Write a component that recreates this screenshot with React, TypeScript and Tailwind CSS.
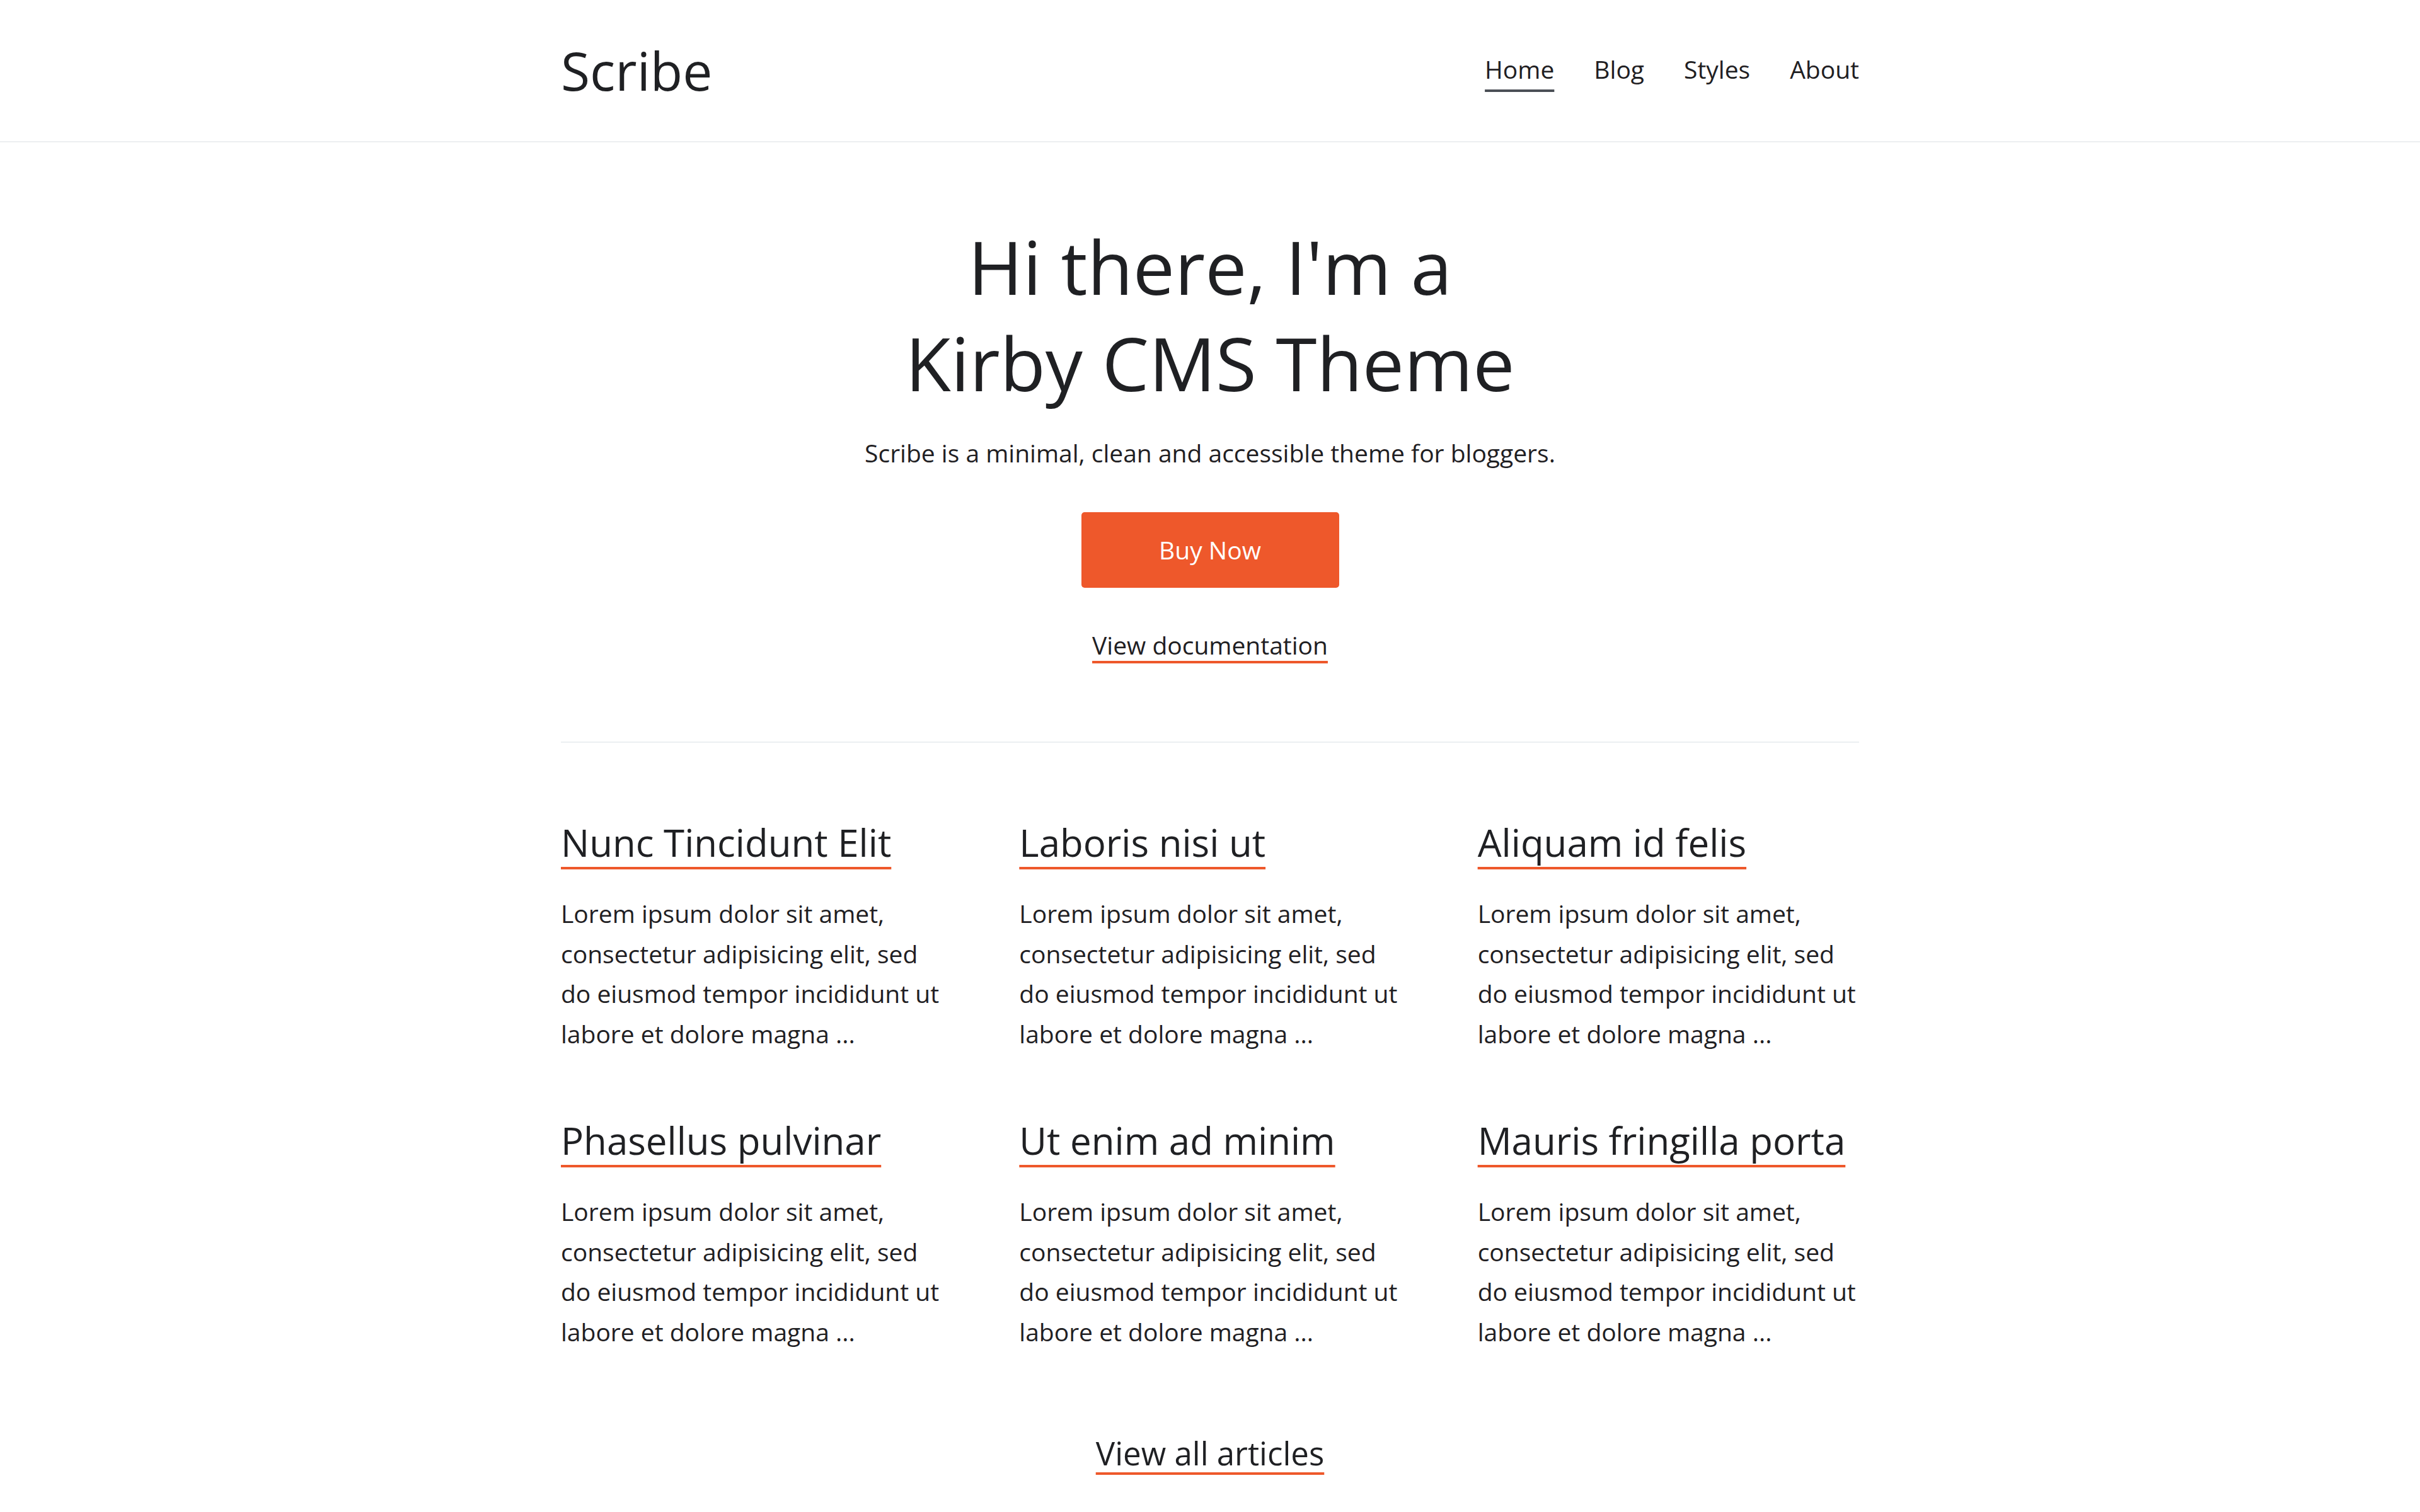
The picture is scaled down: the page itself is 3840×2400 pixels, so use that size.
import React from "react";

const Posts = [
  { title: "Nunc Tincidunt Elit" },
  { title: "Laboris nisi ut" },
  { title: "Aliquam id felis" },
  { title: "Phasellus pulvinar" },
  { title: "Ut enim ad minim" },
  { title: "Mauris fringilla porta" },
];

const excerpt = [
  "Lorem ipsum dolor sit amet,",
  "consectetur adipisicing elit, sed",
  "do eiusmod tempor incididunt ut",
  "labore et dolore magna ...",
];

const navLinks = ["Home", "Blog", "Styles", "About"];

const App = () => {
  return (
    <div className="min-h-screen bg-white font-['Open_Sans',sans-serif] text-[#1f2023]">
      {/* header */}
      <header className="h-[226px] border-b-2 border-[#eceff1]">
        <div className="mx-auto flex h-full w-[2060px] items-center justify-between">
          <a href="#" className="text-[84px] leading-none">
            Scribe
          </a>
          <nav className="flex gap-[63px] pb-[5px] text-[39px] leading-none">
            {navLinks.map((link, idx) =>
              idx === 0 ? (
                <a
                  key={link}
                  href="#"
                  className="underline decoration-[#4a4f56] decoration-[4px] underline-offset-[17px] [text-decoration-skip-ink:none]"
                >
                  {link}
                </a>
              ) : (
                <a key={link} href="#">
                  {link}
                </a>
              )
            )}
          </nav>
        </div>
      </header>

      {/* hero */}
      <section className="mx-auto w-[2060px] pt-[120px] text-center">
        <h1 className="text-[118px] font-normal leading-[153px]">
          Hi there, I'm a
          <br />
          Kirby CMS Theme
        </h1>
        <p className="mt-[35px] text-[39px] leading-[64px]">
          Scribe is a minimal, clean and accessible theme for bloggers.
        </p>
        <div className="mt-[62px] flex justify-center">
          <a
            href="#"
            className="flex h-[120px] w-[409px] items-center justify-center rounded-[5px] bg-[#ee582b] text-[39px] text-white"
          >
            Buy Now
          </a>
        </div>
        <div className="mt-[59px] text-[39px] leading-[64px]">
          <a
            href="#"
            className="underline decoration-[#ee582b] decoration-[4px] underline-offset-[10px] [text-decoration-skip-ink:none]"
          >
            View documentation
          </a>
        </div>
        <div className="mt-[121px] border-t-2 border-[#eceff1]" />
      </section>

      {/* articles */}
      <section className="mx-auto w-[2060px] pt-[119px]">
        <div className="grid grid-cols-3 gap-x-[122px] gap-y-[98px]">
          {Posts.map((post) => (
            <article key={post.title}>
              <h2 className="text-[60px] font-normal leading-[78px]">
                <a
                  href="#"
                  className="underline decoration-[#ee582b] decoration-[4px] underline-offset-[16px] [text-decoration-skip-ink:none]"
                >
                  {post.title}
                </a>
              </h2>
              <p className="mt-[42px] whitespace-nowrap text-[39px] leading-[63.7px]">
                {excerpt.map((line, i) => (
                  <React.Fragment key={i}>
                    {line}
                    {i < excerpt.length - 1 && <br />}
                  </React.Fragment>
                ))}
              </p>
            </article>
          ))}
        </div>
        <div className="mt-[122px] pb-[120px] text-center text-[51px] leading-[76px]">
          <a
            href="#"
            className="underline decoration-[#ee582b] decoration-[4px] underline-offset-[11px] [text-decoration-skip-ink:none]"
          >
            View all articles
          </a>
        </div>
      </section>
    </div>
  );
};

export default App;
